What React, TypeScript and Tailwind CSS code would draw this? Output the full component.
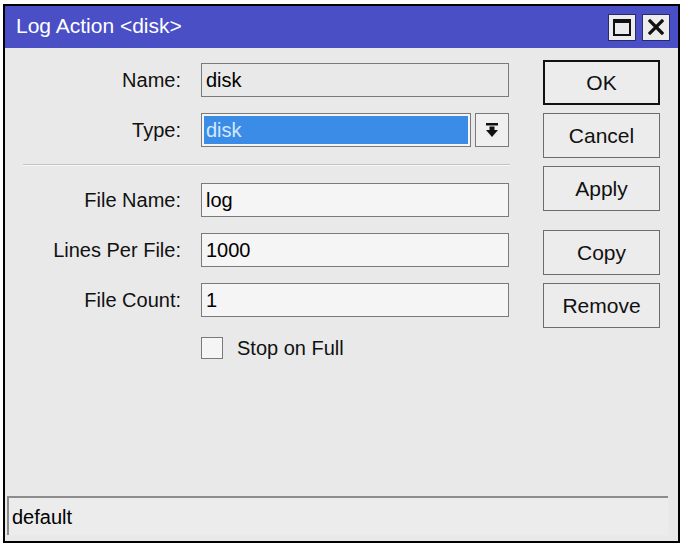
import React from 'react';

const font = { fontFamily: '"Liberation Sans", Arial, sans-serif' };

const Field: React.FC<{ label: string; value: string; readOnly?: boolean }> = ({ label, value, readOnly }) => (
  <div className="flex items-center h-[34px]">
    <div className="w-[177px] text-right pr-[1px] text-[20px] text-[#111]">{label}</div>
    <div
      className={`ml-[19px] w-[308px] h-[34px] border border-[#7a7a7a] flex items-center pl-[4px] text-[20px] text-black ${
        readOnly ? 'bg-[#e9e9e9]' : 'bg-[#f5f5f5]'
      }`}
    >
      {value}
    </div>
  </div>
);

const Btn: React.FC<{ label: string; primary?: boolean }> = ({ label, primary }) => (
  <div
    className={`w-[117px] h-[45px] flex items-center justify-center text-[21px] text-[#111] bg-[#ececec] ${
      primary ? 'border-2 border-[#111]' : 'border border-[#6d6d6d]'
    }`}
  >
    {label}
  </div>
);

const App: React.FC = () => {
  return (
    <div className="w-[682px] h-[546px] bg-white pt-[4px] pl-[3px]" style={font}>
      <div className="w-[677px] h-[539px] border-2 border-black flex flex-col bg-[#e9e9e9]">
        {/* title bar */}
        <div className="h-[42px] bg-[#4a4fc6] flex items-center pl-[11px] pr-[8px]">
          <span className="text-white text-[21px] flex-1 pb-[2px]">Log Action &lt;disk&gt;</span>
          <div className="flex gap-[6px]">
            <div className="w-[28px] h-[27px] bg-[#ececec] border border-[#2a2a6a] flex items-center justify-center">
              <svg width="18" height="17" viewBox="0 0 18 17">
                <rect x="1" y="1" width="16" height="15" fill="none" stroke="#111" strokeWidth="2" />
                <rect x="1" y="1" width="16" height="3" fill="#111" />
              </svg>
            </div>
            <div className="w-[28px] h-[27px] bg-[#ececec] border border-[#2a2a6a] flex items-center justify-center">
              <svg width="16" height="16" viewBox="0 0 16 16">
                <path d="M2 2 L14 14 M14 2 L2 14" stroke="#111" strokeWidth="3.2" strokeLinecap="square" />
              </svg>
            </div>
          </div>
        </div>

        {/* body */}
        <div className="flex flex-1">
          <div className="flex flex-col pt-[15px]">
            <Field label="Name:" value="disk" readOnly />
            <div className="flex items-center h-[34px] mt-[16px]">
              <div className="w-[177px] text-right pr-[1px] text-[20px] text-[#111]">Type:</div>
              <div className="ml-[19px] w-[270px] h-[34px] border border-[#7a7a7a] bg-[#f5f5f5] p-[2px]">
                <div className="h-full bg-[#3a8ce6] flex items-center pl-[2px] text-[20px] text-[#d6e8ff]">disk</div>
              </div>
              <div className="ml-[4px] w-[34px] h-[34px] border border-[#7a7a7a] bg-[#f0f0f0] flex items-center justify-center">
                <svg width="12" height="14" viewBox="0 0 12 14">
                  <rect x="0" y="0" width="12" height="2.5" fill="#111" />
                  <rect x="3.5" y="3.5" width="5" height="4" fill="#111" />
                  <path d="M0 7 L12 7 L6 14 Z" fill="#111" />
                </svg>
              </div>
            </div>
            <div className="ml-[18px] w-[487px] h-[2px] mt-[17px] mb-[17px] border-t border-[#c4c4c4] border-b border-b-[#f8f8f8]" />
            <div className="flex flex-col gap-[16px]">
              <Field label="File Name:" value="log" />
              <Field label="Lines Per File:" value="1000" />
              <Field label="File Count:" value="1" />
            </div>
            <div className="flex items-center mt-[16px] ml-[196px]">
              <div className="w-[22px] h-[22px] border border-[#7a7a7a] bg-[#f5f5f5]" />
              <span className="ml-[14px] text-[20px] text-[#111]">Stop on Full</span>
            </div>
          </div>

          <div className="flex flex-col ml-[33px] pt-[12px]">
            <Btn label="OK" primary />
            <div className="mt-[8px]"><Btn label="Cancel" /></div>
            <div className="mt-[8px]"><Btn label="Apply" /></div>
            <div className="mt-[19px]"><Btn label="Copy" /></div>
            <div className="mt-[8px]"><Btn label="Remove" /></div>
          </div>
        </div>

        {/* status bar */}
        <div className="ml-[2px] mb-[6px] w-[661px] h-[39px] border-t-2 border-l-2 border-[#8c8c8c] bg-[#ececec] flex items-center pl-[3px] text-[20px] text-black">
          default
        </div>
      </div>
    </div>
  );
};

export default App;
